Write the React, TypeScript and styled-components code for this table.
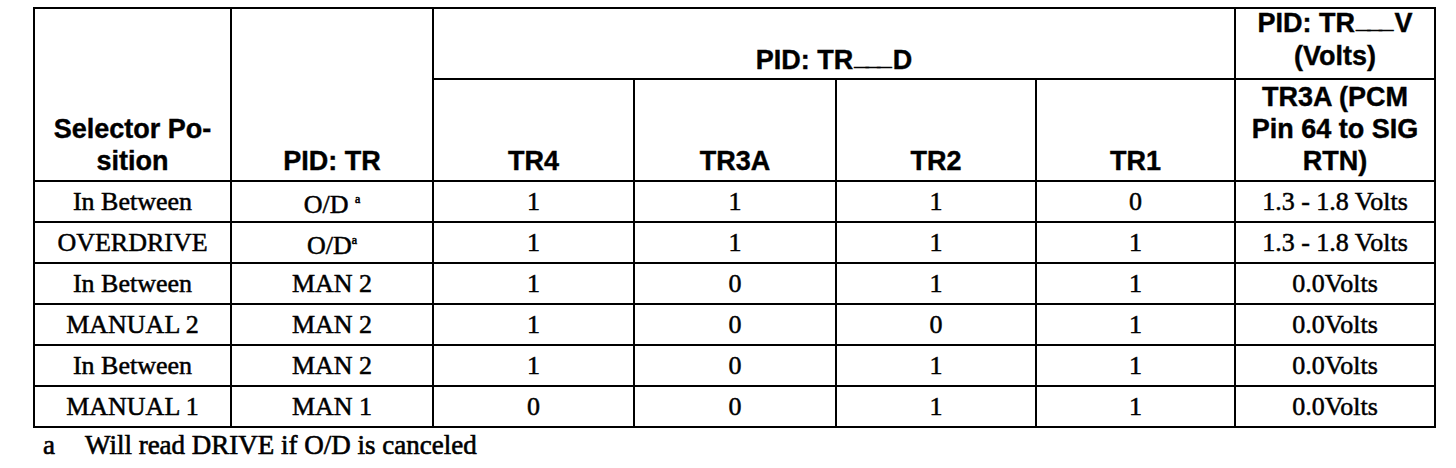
import React from "react";
import styled, { createGlobalStyle } from "styled-components";

const Global = createGlobalStyle`
  html, body { margin: 0; padding: 0; background: #ffffff; }
  body { width: 1456px; height: 468px; overflow: hidden; }
`;

const Page = styled.div`
  padding: 7px 0 0 33px;
  display: flex;
  flex-direction: column;
  align-items: flex-start;
`;

const Table = styled.table`
  border-collapse: collapse;
  table-layout: fixed;
  width: 1401px;
  color: #000;
`;

const Col = styled.col<{ $w: number }>`
  width: ${(p) => p.$w}px;
`;

const Th = styled.th<{ $align?: "top" | "middle" | "bottom"; $h?: number; $pb?: number }>`
  border: 2px solid #000;
  font-family: "Liberation Sans", Arial, sans-serif;
  font-weight: 700;
  font-size: 27px;
  -webkit-text-stroke: 0.4px #000;
  line-height: 32px;
  text-align: center;
  vertical-align: ${(p) => p.$align ?? "bottom"};
  padding: 0 2px ${(p) => p.$pb ?? 3}px;
  height: ${(p) => (p.$h ? `${p.$h}px` : "auto")};
  box-sizing: border-box;
`;

const TopStack = styled.div`
  margin-top: -6px;
  line-height: 33px;
`;

const Blank = styled.span`
  letter-spacing: -3px;
  margin-left: 1px;
  margin-right: 4px;
  vertical-align: 4px;
  font-size: 26px;
`;

const Td = styled.td`
  border: 2px solid #000;
  font-family: "Liberation Serif", "Times New Roman", serif;
  font-size: 26px;
  -webkit-text-stroke: 0.5px #000;
  height: 41px;
  box-sizing: border-box;
  text-align: center;
  vertical-align: middle;
  padding: 0 2px;
  line-height: 28px;
`;

const Note = styled.sup`
  font-size: 12px;
  vertical-align: 10px;
  -webkit-text-stroke: 0.6px #000;
`;

const Footnote = styled.div`
  display: flex;
  gap: 30px;
  margin: 2px 0 0 10px;
  font-family: "Liberation Serif", "Times New Roman", serif;
  font-size: 27px;
  -webkit-text-stroke: 0.6px #000;
  line-height: 30px;
  color: #000;
`;

type Row = {
  pos: string;
  pid: React.ReactNode;
  tr4: string;
  tr3a: string;
  tr2: string;
  tr1: string;
  volts: string;
};

const rows: Row[] = [
  { pos: "In Between", pid: <>O/D <Note>a</Note></>, tr4: "1", tr3a: "1", tr2: "1", tr1: "0", volts: "1.3 - 1.8 Volts" },
  { pos: "OVERDRIVE", pid: <>O/D<Note>a</Note></>, tr4: "1", tr3a: "1", tr2: "1", tr1: "1", volts: "1.3 - 1.8 Volts" },
  { pos: "In Between", pid: "MAN 2", tr4: "1", tr3a: "0", tr2: "1", tr1: "1", volts: "0.0Volts" },
  { pos: "MANUAL 2", pid: "MAN 2", tr4: "1", tr3a: "0", tr2: "0", tr1: "1", volts: "0.0Volts" },
  { pos: "In Between", pid: "MAN 2", tr4: "1", tr3a: "0", tr2: "1", tr1: "1", volts: "0.0Volts" },
  { pos: "MANUAL 1", pid: "MAN 1", tr4: "0", tr3a: "0", tr2: "1", tr1: "1", volts: "0.0Volts" },
];

export default function App() {
  return (
    <>
      <Global />
      <Page>
        <Table>
          <colgroup>
            <Col $w={197} />
            <Col $w={202} />
            <Col $w={201} />
            <Col $w={202} />
            <Col $w={200} />
            <Col $w={199} />
            <Col $w={200} />
          </colgroup>
          <thead>
            <tr>
              <Th rowSpan={2}>
                Selector Po-
                <br />
                sition
              </Th>
              <Th rowSpan={2}>PID: TR</Th>
              <Th colSpan={4} $h={71} $pb={2}>
                PID: TR<Blank>___</Blank>D
              </Th>
              <Th $h={71} $align="top">
                <TopStack>
                  PID: TR<Blank>___</Blank>V
                  <br />
                  (Volts)
                </TopStack>
              </Th>
            </tr>
            <tr>
              <Th $h={102}>TR4</Th>
              <Th>TR3A</Th>
              <Th>TR2</Th>
              <Th>TR1</Th>
              <Th>
                TR3A (PCM
                <br />
                Pin 64 to SIG
                <br />
                RTN)
              </Th>
            </tr>
          </thead>
          <tbody>
            {rows.map((r, i) => (
              <tr key={i}>
                <Td>{r.pos}</Td>
                <Td>{r.pid}</Td>
                <Td>{r.tr4}</Td>
                <Td>{r.tr3a}</Td>
                <Td>{r.tr2}</Td>
                <Td>{r.tr1}</Td>
                <Td>{r.volts}</Td>
              </tr>
            ))}
          </tbody>
        </Table>
        <Footnote>
          <span>a</span>
          <span>Will read DRIVE if O/D is canceled</span>
        </Footnote>
      </Page>
    </>
  );
}
